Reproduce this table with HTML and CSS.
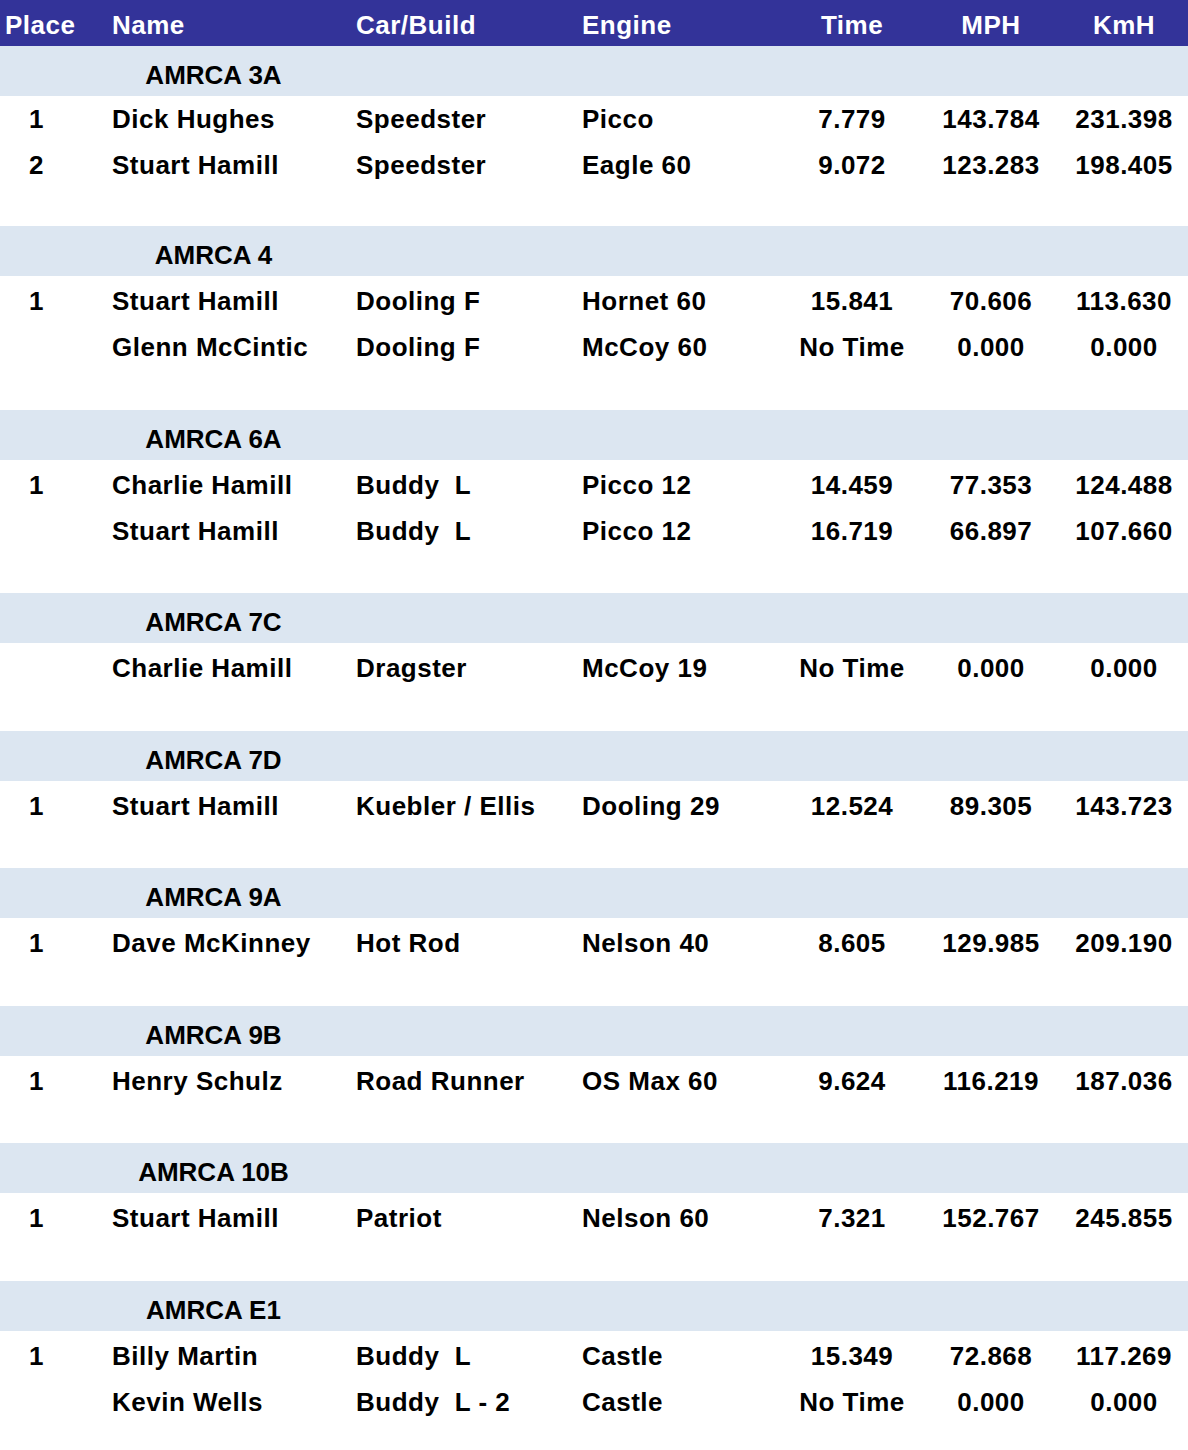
FILE: index.html
```html
<!DOCTYPE html>
<html>
<head>
<meta charset="utf-8">
<link rel="stylesheet" href="styles.css">
</head>
<body>
<div class="sheet">
  <div class="row head">
    <span class="c-place">Place</span><span>Name</span><span>Car/Build</span><span>Engine</span><span class="num">Time</span><span class="num">MPH</span><span class="num">KmH</span>
  </div>

  <section class="group group-first">
    <div class="band"><span class="band-label">AMRCA 3A</span></div>
    <div class="rows">
      <div class="row"><span class="c-place">1</span><span>Dick Hughes</span><span>Speedster</span><span>Picco</span><span class="num">7.779</span><span class="num">143.784</span><span class="num">231.398</span></div>
      <div class="row"><span class="c-place">2</span><span>Stuart Hamill</span><span>Speedster</span><span>Eagle 60</span><span class="num">9.072</span><span class="num">123.283</span><span class="num">198.405</span></div>
    </div>
  </section>

  <section class="group">
    <div class="band"><span class="band-label">AMRCA 4</span></div>
    <div class="rows">
      <div class="row"><span class="c-place">1</span><span>Stuart Hamill</span><span>Dooling F</span><span>Hornet 60</span><span class="num">15.841</span><span class="num">70.606</span><span class="num">113.630</span></div>
      <div class="row"><span class="c-place"></span><span>Glenn McCintic</span><span>Dooling F</span><span>McCoy 60</span><span class="num">No Time</span><span class="num">0.000</span><span class="num">0.000</span></div>
    </div>
  </section>

  <section class="group">
    <div class="band"><span class="band-label">AMRCA 6A</span></div>
    <div class="rows">
      <div class="row"><span class="c-place">1</span><span>Charlie Hamill</span><span>Buddy  L</span><span>Picco 12</span><span class="num">14.459</span><span class="num">77.353</span><span class="num">124.488</span></div>
      <div class="row"><span class="c-place"></span><span>Stuart Hamill</span><span>Buddy  L</span><span>Picco 12</span><span class="num">16.719</span><span class="num">66.897</span><span class="num">107.660</span></div>
    </div>
  </section>

  <section class="group">
    <div class="band"><span class="band-label">AMRCA 7C</span></div>
    <div class="rows">
      <div class="row"><span class="c-place"></span><span>Charlie Hamill</span><span>Dragster</span><span>McCoy 19</span><span class="num">No Time</span><span class="num">0.000</span><span class="num">0.000</span></div>
    </div>
  </section>

  <section class="group">
    <div class="band"><span class="band-label">AMRCA 7D</span></div>
    <div class="rows">
      <div class="row"><span class="c-place">1</span><span>Stuart Hamill</span><span>Kuebler / Ellis</span><span>Dooling 29</span><span class="num">12.524</span><span class="num">89.305</span><span class="num">143.723</span></div>
    </div>
  </section>

  <section class="group">
    <div class="band"><span class="band-label">AMRCA 9A</span></div>
    <div class="rows">
      <div class="row"><span class="c-place">1</span><span>Dave McKinney</span><span>Hot Rod</span><span>Nelson 40</span><span class="num">8.605</span><span class="num">129.985</span><span class="num">209.190</span></div>
    </div>
  </section>

  <section class="group">
    <div class="band"><span class="band-label">AMRCA 9B</span></div>
    <div class="rows">
      <div class="row"><span class="c-place">1</span><span>Henry Schulz</span><span>Road Runner</span><span>OS Max 60</span><span class="num">9.624</span><span class="num">116.219</span><span class="num">187.036</span></div>
    </div>
  </section>

  <section class="group">
    <div class="band"><span class="band-label">AMRCA 10B</span></div>
    <div class="rows">
      <div class="row"><span class="c-place">1</span><span>Stuart Hamill</span><span>Patriot</span><span>Nelson 60</span><span class="num">7.321</span><span class="num">152.767</span><span class="num">245.855</span></div>
    </div>
  </section>

  <section class="group group-last">
    <div class="band"><span class="band-label">AMRCA E1</span></div>
    <div class="rows">
      <div class="row"><span class="c-place">1</span><span>Billy Martin</span><span>Buddy  L</span><span>Castle</span><span class="num">15.349</span><span class="num">72.868</span><span class="num">117.269</span></div>
      <div class="row"><span class="c-place"></span><span>Kevin Wells</span><span>Buddy  L - 2</span><span>Castle</span><span class="num">No Time</span><span class="num">0.000</span><span class="num">0.000</span></div>
    </div>
  </section>
</div>
</body>
</html>
```

FILE: styles.css
```css
html, body {
  margin: 0;
  padding: 0;
  background: #ffffff;
}

.sheet {
  width: 1188px;
  font-family: "Liberation Sans", Arial, sans-serif;
  font-weight: bold;
  font-size: 26px;
  color: #000000;
}

.row {
  display: grid;
  grid-template-columns: 112px 244px 226px 200px 140px 138px 128px;
  height: 46px;
  line-height: 46px;
  letter-spacing: 0.5px;
  white-space: pre;
}

.row .c-place {
  padding-left: 29px;
}

.row .num {
  text-align: center;
}

.head {
  background: #333399;
  color: #ffffff;
  box-sizing: border-box;
  padding-top: 4px;
  line-height: 42px;
}

.head .c-place {
  padding-left: 5px;
}

.group {
  padding-bottom: 39.5px;
}

.group-first {
  padding-bottom: 38px;
}

.group-last {
  padding-bottom: 0;
}

.band {
  display: flex;
  height: 50px;
  box-sizing: border-box;
  padding-top: 9px;
  line-height: 41px;
  background: #dce6f1;
}

.band-label {
  width: 427px;
  text-align: center;
}

.rows {
  padding-top: 2px;
}

.group-first .rows {
  padding-top: 0;
}
```
